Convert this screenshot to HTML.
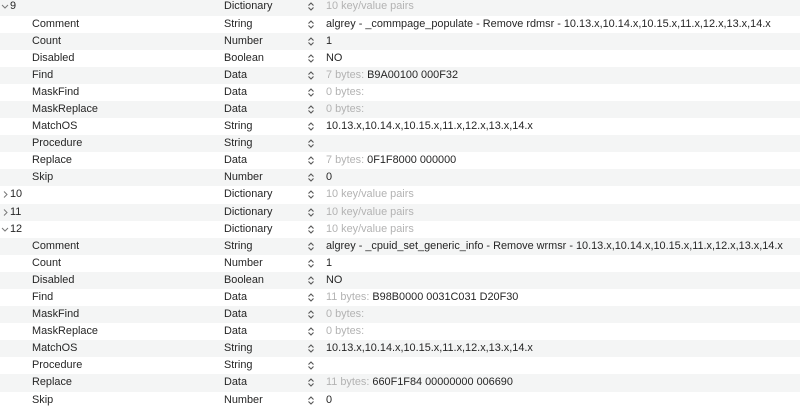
<!DOCTYPE html>
<html><head><style>
body{margin:0;width:800px;height:410px;overflow:hidden;background:#fff;font-family:"Liberation Sans",sans-serif;font-size:10.9px;color:#262626}
#w{position:absolute;top:-1.6px;left:0;width:800px}
.r{height:17.1px;line-height:17.1px;position:relative;white-space:nowrap}
.r:nth-child(even){background:#f4f5f5}
.k{position:absolute;left:32px}
.k.p{left:10px}
.cv{position:absolute;left:1px;top:0;width:8px;height:17px}
.t{position:absolute;left:224px}
.s{position:absolute;left:307px;top:0;width:8px;height:17px}
.v{position:absolute;left:326px}
.g{color:#b3b3b3}
</style></head><body><div id="w">
<script>
const S='<svg class="s" viewBox="0 0 8 17"><path d="M1.5 7.5L4 5L6.5 7.5M1.5 9.5L4 12L6.5 9.5" fill="none" stroke="#555" stroke-width="1.1"/></svg>';
const D='<svg class="cv" viewBox="0 0 8 17"><path d="M1 7L4 10L7 7" fill="none" stroke="#777" stroke-width="1"/></svg>';
const R='<svg class="cv" viewBox="0 0 8 17"><path d="M3 5.5L6 8.5L3 11.5" fill="none" stroke="#777" stroke-width="1"/></svg>';
const os='10.13.x,10.14.x,10.15.x,11.x,12.x,13.x,14.x';
function blk(n,c,f,r){return [
['p',n,'Dictionary','<span class="g">10 key/value pairs</span>',D],
['','Comment','String',c],['','Count','Number','1'],['','Disabled','Boolean','NO'],
['','Find','Data',f],['','MaskFind','Data','<span class="g">0 bytes:</span>'],
['','MaskReplace','Data','<span class="g">0 bytes:</span>'],['','MatchOS','String',os],
['','Procedure','String',''],['','Replace','Data',r],['','Skip','Number','0']];}
let rows=blk('9','algrey - _commpage_populate - Remove rdmsr - '+os,'<span class="g">7 bytes:</span> B9A00100 000F32','<span class="g">7 bytes:</span> 0F1F8000 000000');
rows.push(['p','10','Dictionary','<span class="g">10 key/value pairs</span>',R],['p','11','Dictionary','<span class="g">10 key/value pairs</span>',R]);
rows=rows.concat(blk('12','algrey - _cpuid_set_generic_info - Remove wrmsr - '+os,'<span class="g">11 bytes:</span> B98B0000 0031C031 D20F30','<span class="g">11 bytes:</span> 660F1F84 00000000 006690'));
document.write(rows.map(r=>'<div class="r">'+(r[4]||'')+'<span class="k '+r[0]+'">'+r[1]+'</span><span class="t">'+r[2]+'</span>'+S+'<span class="v">'+r[3]+'</span></div>').join(''));
</script>
</div></body></html>
